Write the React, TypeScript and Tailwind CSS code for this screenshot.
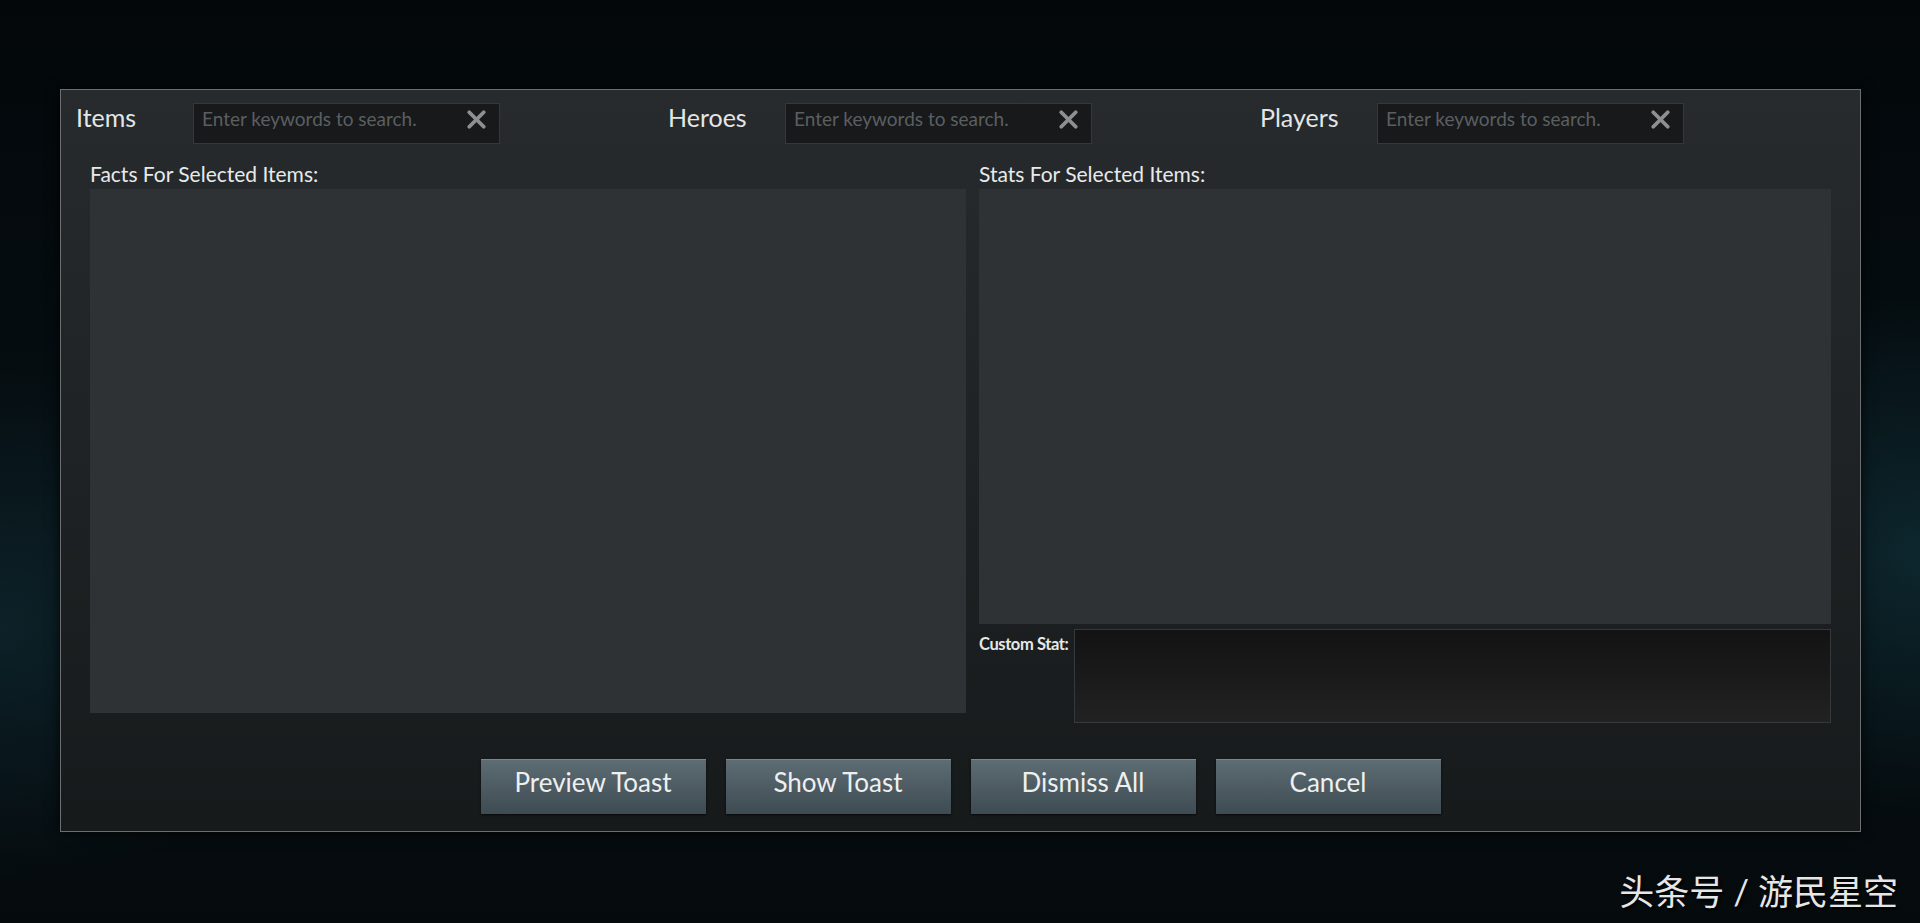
import { X } from "lucide-react"

const searchGroups = ["Items", "Heroes", "Players"]
const actions = ["Preview Toast", "Show Toast", "Dismiss All", "Cancel"]

function SearchField({ label }: { label: string }) {
  return (
    <div className="flex h-[41px] w-[592px] items-center">
      <div className="mb-[12px] w-[117px] text-[25px] leading-[29px] text-[#e4e6e6]">{label}</div>
      <div className="flex h-[41px] w-[307px] items-center justify-between border border-[#34383a] bg-[#17191a] pb-[9px] pl-[8px] pr-[8px]">
        <span className="text-[19px] leading-[24px] text-[#5b5f61]">Enter keywords to search.</span>
        <X size={29} strokeWidth={3.2} className="text-[#8d8f90]" />
      </div>
    </div>
  )
}

export default function App() {
  return (
    <div
      className="relative h-[923px] w-full overflow-hidden bg-[#050b0e] pt-[89px] pl-[60px]"
      style={{ fontFamily: "Lato, 'Open Sans', 'Noto Sans CJK SC', sans-serif" }}
    >
      {/* faint teal glow behind the dialog */}
      <div className="pointer-events-none absolute inset-0 bg-[radial-gradient(ellipse_300px_260px_at_0%_68%,rgba(20,55,65,0.45),transparent),radial-gradient(ellipse_260px_260px_at_100%_60%,rgba(20,60,70,0.5),transparent),linear-gradient(180deg,#03070a_0%,#061014_60%,#050a0d_100%)]" />

      <div className="relative h-[743px] w-[1801px] border border-[#6b6f71] bg-[linear-gradient(180deg,#272b2d_0%,#1f2325_45%,#171a1b_100%)] shadow-[0_0_12px_rgba(0,0,0,0.8)]">
        {/* search bar */}
        <div className="flex pl-[15px] pt-[13px]">
          {searchGroups.map((g) => (
            <SearchField key={g} label={g} />
          ))}
        </div>

        <div className="flex gap-[13px] pl-[29px]">
          {/* facts column */}
          <div className="w-[876px]">
            <div className="pt-[19px] pb-[5px] text-[21px] leading-[21px] text-[#e8eaea]">Facts For Selected Items:</div>
            <div className="h-[524px] bg-[#2e3235]" />
          </div>

          {/* stats column */}
          <div className="w-[852px]">
            <div className="pt-[19px] pb-[5px] text-[21px] leading-[21px] text-[#e8eaea]">Stats For Selected Items:</div>
            <div className="h-[435px] bg-[#2e3235]" />
            <div className="mt-[5px] flex">
              <div className="w-[95px] pt-[5px] text-[16.5px] font-bold leading-[20px] tracking-[-0.4px] text-[#e6e8e8]">Custom Stat:</div>
              <div className="h-[94px] w-[757px] border border-[#36393b] bg-[linear-gradient(180deg,#131313_0%,#1a1a1a_50%,#222222_100%)]" />
            </div>
          </div>
        </div>

        {/* dialog buttons */}
        <div className="mt-[36px] flex justify-center gap-[20px]">
          {actions.map((a) => (
            <button
              key={a}
              className="h-[55px] w-[225px] border-t border-[#7a878d] bg-[linear-gradient(180deg,#5e6c74_0%,#4d5b63_50%,#3e4b52_100%)] pb-[9px] text-[26px] text-[#eef0f0] shadow-[0_1px_2px_rgba(0,0,0,0.7)]"
            >
              {a}
            </button>
          ))}
        </div>
      </div>

      {/* channel watermark */}
      <div className="absolute bottom-[12px] right-[22px] text-[35px] leading-[40px] text-[#e6e6e6] [text-shadow:2px_2px_2px_rgba(0,0,0,0.9)]">
        头条号 / 游民星空
      </div>
    </div>
  )
}
